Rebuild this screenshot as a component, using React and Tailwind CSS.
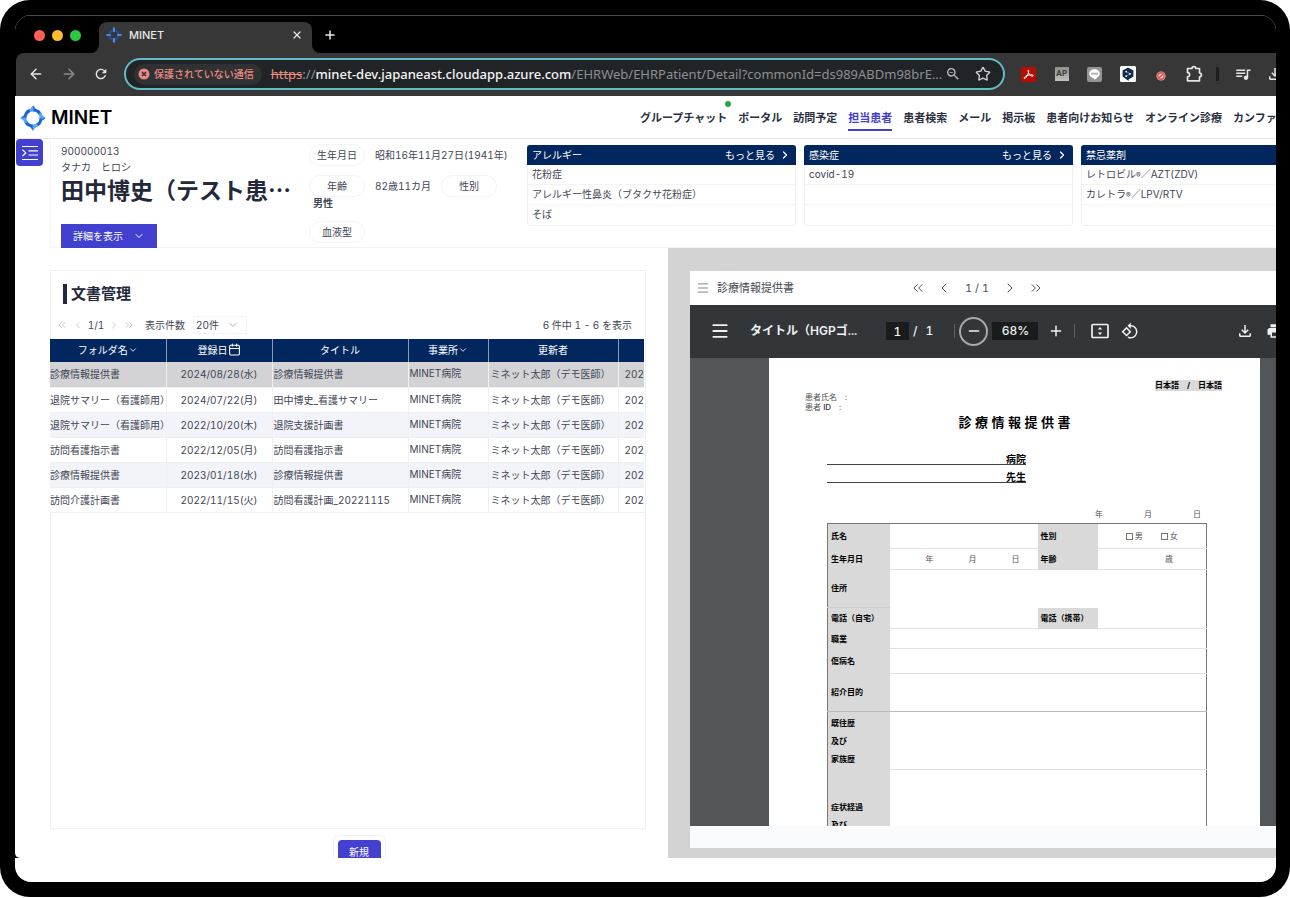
import React from "react";
import {
  ArrowLeft,
  ArrowRight,
  Calendar,
  ChevronDown,
  ChevronLeft,
  ChevronRight,
  ChevronsLeft,
  ChevronsRight,
  Menu,
  Minus,
  Plus,
  Star,
  X,
} from "lucide-react";
import {
  MdOutlineFileDownload,
  MdPrint,
  MdQueueMusic,
  MdRefresh,
  MdRotate90DegreesCcw,
  MdZoomOut,
} from "react-icons/md";

const NAV = [
  { label: "グループチャット", dot: true },
  { label: "ポータル" },
  { label: "訪問予定" },
  { label: "担当患者", active: true },
  { label: "患者検索" },
  { label: "メール" },
  { label: "掲示板" },
  { label: "患者向けお知らせ" },
  { label: "オンライン診療" },
  { label: "カンファ" },
];

const DOCUMENTS = [
  { folder: "診療情報提供書", date: "2024/08/28(水)", title: "診療情報提供書", selected: true },
  { folder: "退院サマリー（看護師用）", date: "2024/07/22(月)", title: "田中博史_看護サマリー" },
  { folder: "退院サマリー（看護師用）", date: "2022/10/20(木)", title: "退院支援計画書" },
  { folder: "訪問看護指示書", date: "2022/12/05(月)", title: "訪問看護指示書" },
  { folder: "診療情報提供書", date: "2023/01/18(水)", title: "診療情報提供書" },
  { folder: "訪問介護計画書", date: "2022/11/15(火)", title: "訪問看護計画_20221115" },
];

function LogoBlade({ angle }) {
  return (
    <g transform={`rotate(${angle} 12 12)`}>
      <path d="M12 .3 L14.600 3.700 Q19 4.600 20.200 8.800 L17.400 9.200 A6 6 0 0 0 12 6 Z" fill="#1f62d6" />
      <path d="M12 .3 L12.600 6 A6 6 0 0 0 8.600 7 L6.600 4.800 L9.300 3.600 Z" fill="#58a6f7" />
    </g>
  );
}

function Logo({ className }) {
  return (
    <svg viewBox="0 0 24 24" className={className} aria-hidden="true">
      <LogoBlade angle={0} />
      <LogoBlade angle={90} />
      <LogoBlade angle={180} />
      <LogoBlade angle={270} />
    </svg>
  );
}

function Favicon() {
  return (
    <svg viewBox="0 0 16 16" className="size-4 shrink-0" fill="none" aria-hidden="true">
      <circle cx="8" cy="8" r="4.600" stroke="#1b4fae" strokeWidth="2.200" strokeDasharray="4.600 2.620" strokeDashoffset="-1.300" />
      <path d="M8 1v3.200M8 11.800V15M1 8h3.200M11.800 8H15" stroke="#5fa8f5" strokeWidth="1.600" strokeLinecap="round" />
    </svg>
  );
}

function TabStrip() {
  return (
    <div className="flex h-[38px] items-end border-t border-[#4a4a4a] pl-[19px]">
      <div className="flex h-full items-center gap-[7px] pt-0.5">
        <span className="size-[11px] rounded-full bg-[#fe5f57]" />
        <span className="size-[11px] rounded-full bg-[#febc2e]" />
        <span className="size-[11px] rounded-full bg-[#28c840]" />
      </div>
      <div className="relative ml-[18px] flex h-[31px] w-[213px] items-center rounded-t-lg bg-[#373737] pr-[9px] pb-1.5 pl-[7px] text-[#e8e8e8]">
        <svg viewBox="0 0 8 8" className="absolute bottom-0 -left-2 size-2" aria-hidden="true">
          <path d="M8 0v8H0a8 8 0 0 0 8-8Z" fill="#373737" />
        </svg>
        <svg viewBox="0 0 8 8" className="absolute -right-2 bottom-0 size-2" aria-hidden="true">
          <path d="M0 0v8h8a8 8 0 0 1-8-8Z" fill="#373737" />
        </svg>
        <Favicon />
        <span className="ml-[7px] text-[11px] leading-4 font-medium">MINET</span>
        <button type="button" aria-label="タブを閉じる" className="ml-auto">
          <X className="size-3" strokeWidth={2.600} />
        </button>
      </div>
      <button type="button" aria-label="新しいタブ" className="ml-[11px] flex h-[31px] items-center pb-1.5 text-[#e8e8e8]">
        <Plus className="size-3.5" strokeWidth={2.600} />
      </button>
    </div>
  );
}

function PdfBadge() {
  return (
    <svg viewBox="0 0 15 15" className="size-[15px]" aria-hidden="true">
      <rect width="15" height="15" rx="1.500" fill="#b80d05" />
      <path d="M7.400 3.200c-1.200 0 .4 3.200 1.300 4.500 1 1.300 3.400 2 3.500.9.100-1.200-4.200-.9-6.200 0-1.800.8-3.400 2.100-2.700 2.900.9.900 3.100-2.900 3.700-4.600.5-1.500 1.300-3.700.4-3.700Z" stroke="#fff" strokeWidth="1" fill="none" />
    </svg>
  );
}

function HexBadge() {
  return (
    <svg viewBox="0 0 16 16" className="size-4" aria-hidden="true">
      <rect width="16" height="16" rx="1.500" fill="#fff" />
      <path d="M8 1.400 13.400 4.400V10.600L8.600 13.400V15L2.600 10.600V4.400Z" fill="#0f2b46" />
      <path d="m6.200 5.600 4 2.200-4 2.400" stroke="#8fb3d1" strokeWidth=".7" fill="none" />
      <circle cx="6.200" cy="5.600" r=".9" fill="#fff" />
      <circle cx="10" cy="7.800" r=".9" fill="#fff" />
      <circle cx="6.200" cy="10.200" r=".9" fill="#fff" />
    </svg>
  );
}

function BlockedBadge() {
  return (
    <svg viewBox="0 0 10 10" className="mt-1 size-[10px]" aria-hidden="true">
      <circle cx="5" cy="5" r="4.600" fill="#f2b8b5" />
      <circle cx="5" cy="5" r="3.200" fill="#f7dcdb" stroke="#dc4b48" strokeWidth="1.400" />
      <path d="M7 3 3 7" stroke="#dc4b48" strokeWidth="1.400" />
    </svg>
  );
}

function PuzzleIcon() {
  return (
    <svg viewBox="0 0 18 18" className="size-[18px]" fill="none" stroke="#e6e6e6" strokeWidth="1.700" strokeLinejoin="round" aria-hidden="true">
      <path d="M2.500 3.500H7a1.900 1.900 0 0 1 3.800 0h3.700V8a1.900 1.900 0 0 1 0 3.800v4H2.500v-4a2.100 2.100 0 0 0 0-4.200Z" />
    </svg>
  );
}

function ExtensionButton({ label, children }) {
  return (
    <button type="button" aria-label={label} className="flex w-[33px] shrink-0 items-center justify-center">
      {children}
    </button>
  );
}

function AddressBar() {
  return (
    <div className="flex h-[43px] items-center rounded-tl-lg bg-[#373737] pb-px text-[#e6e6e6]">
      <div className="flex w-[108px] shrink-0 items-center justify-between pr-[15px] pl-3">
        <button type="button" aria-label="戻る">
          <ArrowLeft className="size-4" strokeWidth={2.200} />
        </button>
        <button type="button" aria-label="進む" className="text-[#8b8b8b]">
          <ArrowRight className="size-4" strokeWidth={2.200} />
        </button>
        <button type="button" aria-label="再読み込み">
          <MdRefresh className="size-4" />
        </button>
      </div>
      <div className="flex h-8 min-w-0 flex-1 items-center rounded-full border-2 border-[#62bcc6] bg-[#202427] pr-3 pl-2">
        <div className="flex h-[21px] shrink-0 items-center gap-1 rounded-full bg-[#303132] pr-2 pl-1 text-[#ea8a84]">
          <svg viewBox="0 0 12 12" className="size-3" aria-hidden="true">
            <circle cx="6" cy="6" r="5.500" fill="#ea8a84" />
            <path d="m4 4 4 4M8 4 4 8" stroke="#303132" strokeWidth="1.500" />
          </svg>
          <span className="text-[10px] leading-4 font-medium">保護されていない通信</span>
        </div>
        <div className="ml-[9px] min-w-0 flex-1 font-['Noto_Sans',sans-serif] text-[13px] leading-5 whitespace-nowrap text-[#8d9092]">
          <span className="text-[#ea8a84] line-through">https</span>://
          <span className="font-medium text-[#f4f4f4]">minet-dev.japaneast.cloudapp.azure.com</span>
          /EHRWeb/EHRPatient/Detail?commonId=ds989ABDm98brE...
        </div>
        <button type="button" aria-label="ズーム" className="mr-3.5 text-[#bdbdbd]">
          <MdZoomOut className="size-4" />
        </button>
        <button type="button" aria-label="ブックマーク">
          <Star className="size-4 text-[#d0d0d0]" />
        </button>
      </div>
      <div className="flex w-[271px] shrink-0 items-center overflow-hidden pl-[7px]">
        <ExtensionButton label="PDF">
          <PdfBadge />
        </ExtensionButton>
        <ExtensionButton label="AP">
          <span className="flex size-3.5 items-start justify-center bg-linear-to-b from-[#8e908c] to-[#c2c3bf] pt-0.5 text-[8px] leading-none font-bold text-[#3f403e]">
            AP
          </span>
        </ExtensionButton>
        <ExtensionButton label="LINE">
          <svg viewBox="0 0 15 15" className="size-[15px]" aria-hidden="true">
            <rect width="15" height="15" rx="2" fill="#949494" />
            <path d="M7.500 2.300c3 0 5.300 1.900 5.300 4.300 0 2.300-2.800 4.500-5 6.100-.6.300-.5-.3-.4-1.300C4.500 11.200 2.200 9.100 2.200 6.600c0-2.400 2.300-4.300 5.300-4.300Z" fill="#fff" />
            <rect x="4" y="5.700" width="7" height="2" fill="#b5b5b5" />
          </svg>
        </ExtensionButton>
        <ExtensionButton label="翻訳">
          <HexBadge />
        </ExtensionButton>
        <ExtensionButton label="ブロック">
          <BlockedBadge />
        </ExtensionButton>
        <ExtensionButton label="拡張機能">
          <PuzzleIcon />
        </ExtensionButton>
        <span className="mx-1.5 h-3.5 w-[3px] shrink-0 bg-[#1d1d1d]" />
        <button type="button" aria-label="メディア" className="flex w-9 shrink-0 justify-center">
          <MdQueueMusic className="size-[18px]" />
        </button>
        <button type="button" aria-label="ダウンロード" className="flex w-7 shrink-0 justify-center">
          <MdOutlineFileDownload className="size-[18px]" />
        </button>
      </div>
    </div>
  );
}

function AppHeader() {
  return (
    <header className="flex h-[43px] shrink-0 items-center border-b border-[#e7e7e9] pl-1">
      <a href="#home" className="flex shrink-0 items-center gap-[5px] pt-0.5">
        <Logo className="size-[26px]" />
        <span className="text-[19px] leading-6 font-semibold text-black">MINET</span>
      </a>
      <nav className="ml-auto flex h-full w-[636px] shrink-0 items-center gap-[11px] overflow-hidden text-[11px] leading-4 font-bold whitespace-nowrap text-[#2a3040]">
        {NAV.map((item) => (
          <a
            key={item.label}
            href="#nav"
            className={
              item.active
                ? "relative shrink-0 border-b-2 border-[#4340cf] pt-[7px] pb-[3px] text-[#4340cf]"
                : "relative shrink-0 border-b-2 border-transparent pt-[7px] pb-[3px]"
            }
          >
            {item.label}
            {item.dot && <span className="absolute -top-0.5 -right-1 size-1.5 rounded-full bg-[#28a745]" />}
          </a>
        ))}
      </nav>
    </header>
  );
}

function Pill({ children }) {
  return (
    <span className="flex h-[22px] w-14 shrink-0 items-center justify-center rounded-full border border-[#f4f4f5]">{children}</span>
  );
}

function SummaryCard({ title, rows, more = true }) {
  return (
    <section className="w-[269px] shrink-0 rounded-[3px] border border-[#f0f0f2]">
      <div className="-m-px flex h-5 items-center justify-between rounded-t-[3px] bg-[#02275f] px-[5px] text-white">
        <h2>{title}</h2>
        {more && (
          <a href="#more" className="flex items-center gap-1">
            もっと見る
            <ChevronRight className="size-3" strokeWidth={2.500} />
          </a>
        )}
      </div>
      <ul className="mt-px">
        {rows.map((row, i) => (
          <li key={i} className="h-5 border-b border-[#f4f4f5] px-1 leading-[19px] last:border-b-0">
            {row}
          </li>
        ))}
      </ul>
    </section>
  );
}

function Registered() {
  return <span className="text-[7px]">®</span>;
}

function PatientHeader() {
  return (
    <div className="flex h-[109px] shrink-0">
      <div className="w-[34px] shrink-0">
        <button type="button" aria-label="メニューを開く" className="flex size-[27px] items-center justify-center rounded-sm bg-[#4340cf]">
          <svg viewBox="0 0 18 18" className="size-[18px]" fill="none" stroke="#fff" strokeWidth="1.200" aria-hidden="true">
            <path d="M1 2.500h16M7.500 6.800H17M7.500 11H17M1 15.500h16M1.500 5.800 4.800 8.900 1.500 12" />
          </svg>
        </button>
      </div>
      <div className="flex min-w-0 flex-1 border-b border-l border-[#f4f4f5] text-[10px] leading-4 text-[#3f4654]">
        <div className="flex w-[258px] shrink-0 flex-col pt-1 pl-2.5">
          <span>900000013</span>
          <span>タナカ　ヒロシ</span>
          <h1 className="font-['Noto_Sans_CJK_JP',sans-serif] text-[23px] leading-7 font-bold whitespace-nowrap text-[#23293a]">
            田中博史（テスト患…
          </h1>
          <button type="button" className="mt-auto -mb-px flex h-6 w-24 items-center justify-between bg-[#4340cf] px-3 text-white">
            詳細を表示
            <ChevronDown className="size-3" />
          </button>
        </div>
        <div className="flex w-[218px] shrink-0 flex-col pt-[5px]">
          <div className="flex items-center gap-2.5 whitespace-nowrap">
            <Pill>生年月日</Pill>
            昭和16年11月27日(1941年)
          </div>
          <div className="mt-[9px] flex items-center gap-2.5">
            <Pill>年齢</Pill>
            <span className="w-14 shrink-0 whitespace-nowrap">82歳11カ月</span>
            <Pill>性別</Pill>
          </div>
          <span className="pl-1 leading-3 font-bold">男性</span>
          <div className="mt-3">
            <Pill>血液型</Pill>
          </div>
        </div>
        <div className="flex min-w-0 flex-1 items-start gap-2 overflow-hidden pt-1.5">
          <SummaryCard title="アレルギー" rows={["花粉症", "アレルギー性鼻炎（ブタクサ花粉症）", "そば"]} />
          <SummaryCard title="感染症" rows={["covid-19", "", ""]} />
          <SummaryCard
            title="禁忌薬剤"
            rows={[
              <>レトロビル<Registered />／AZT(ZDV)</>,
              <>カレトラ<Registered />／LPV/RTV</>,
              "",
            ]}
            more={false}
          />
        </div>
      </div>
    </div>
  );
}

function HeaderCell({ children }) {
  return (
    <th className="border-r border-[#8b9cba] p-0 pb-0.5 font-normal">
      <div className="flex items-center justify-center">{children}</div>
    </th>
  );
}

function rowColor(doc, index) {
  if (doc.selected) return "bg-[#d3d3d5]";
  return index % 2 === 0 ? "bg-[#f3f4f9]" : "bg-white";
}

function DocumentList() {
  return (
    <section className="flex w-[652px] shrink-0 flex-col items-center pl-[34px] text-[10px] leading-4 text-[#3f4654]">
      <div className="mt-[22px] mr-[22px] flex-1 self-stretch border border-[#f0f0f2]">
        <h2 className="mt-[13px] ml-3 border-l-4 border-[#23293a] pl-1 text-[15px] leading-5 font-bold text-[#23293a]">文書管理</h2>
        <div className="mt-3 flex h-[18px] items-center pr-[13px] pl-[5px]">
          <button type="button" aria-label="最初のページ" className="text-[#b8bbc2]">
            <ChevronsLeft className="size-3" strokeWidth={1.500} />
          </button>
          <button type="button" aria-label="前のページ" className="ml-1 text-[#b8bbc2]">
            <ChevronLeft className="size-3" strokeWidth={1.500} />
          </button>
          <span className="mx-[3px] w-[18px] text-center">1/1</span>
          <button type="button" aria-label="次のページ" className="text-[#b8bbc2]">
            <ChevronRight className="size-3" strokeWidth={1.500} />
          </button>
          <button type="button" aria-label="最後のページ" className="ml-[3px] text-[#b8bbc2]">
            <ChevronsRight className="size-3" strokeWidth={1.500} />
          </button>
          <label htmlFor="page-size" className="ml-2.5">
            表示件数
          </label>
          <div className="relative ml-2 flex items-center">
            <select id="page-size" className="h-[18px] w-[54px] appearance-none border border-[#f4f4f5] bg-white pl-0.5">
              <option>20件</option>
            </select>
            <ChevronDown className="pointer-events-none absolute right-2 size-3 text-[#8a8f99]" strokeWidth={1.500} />
          </div>
          <span className="ml-auto">6 件中 1 - 6 を表示</span>
        </div>
        <div className="mt-[5px] mr-px -ml-px overflow-hidden">
          <table className="w-full table-fixed whitespace-nowrap">
            <colgroup>
              <col className="w-[116px]" />
              <col className="w-[106px]" />
              <col className="w-[136px]" />
              <col className="w-20" />
              <col className="w-[130px]" />
              <col />
            </colgroup>
            <thead>
              <tr className="h-[23px] bg-[#02275f] text-white">
                <HeaderCell>
                  フォルダ名
                  <ChevronDown className="size-2.5" strokeWidth={2} />
                </HeaderCell>
                <HeaderCell>
                  登録日
                  <Calendar className="size-[13px]" strokeWidth={2} />
                </HeaderCell>
                <HeaderCell>タイトル</HeaderCell>
                <HeaderCell>
                  事業所
                  <ChevronDown className="size-2.5" strokeWidth={2} />
                </HeaderCell>
                <HeaderCell>更新者</HeaderCell>
                <th />
              </tr>
            </thead>
            <tbody>
              {DOCUMENTS.map((doc, i) => (
                <tr key={i} className={`h-[25px] border-b border-[#eff0f3] ${rowColor(doc, i)}`}>
                  <td className="border-r border-[#eff0f3]">{doc.folder}</td>
                  <td className="border-r border-[#eff0f3] text-center">{doc.date}</td>
                  <td className="border-r border-[#eff0f3] pl-px">{doc.title}</td>
                  <td className="border-r border-[#eff0f3] pt-[3px] pl-px align-top">MINET病院</td>
                  <td className="border-r border-[#eff0f3] pl-0.5">ミネット太郎（デモ医師）</td>
                  <td className="pl-1.5">202</td>
                </tr>
              ))}
            </tbody>
          </table>
        </div>
      </div>
      <div className="mt-1.5 h-[23px] shrink-0 overflow-hidden rounded-t-md border border-b-0 border-[#f0f0f2] px-1 pt-1">
        <button type="button" className="h-6 w-[43px] rounded-t-sm bg-[#4340cf] text-white">
          新規
        </button>
      </div>
    </section>
  );
}

function FormLabel({ children, className = "" }) {
  return <th className={`bg-[#d9d9d9] pl-[3px] text-left font-bold text-black ${className}`}>{children}</th>;
}

function Choice({ id, children }) {
  return (
    <label htmlFor={id} className="flex items-center gap-0.5">
      <input id={id} type="checkbox" className="size-[7px] appearance-none border border-[#777]" />
      {children}
    </label>
  );
}

function ReferralForm() {
  const line = "border-b border-[#e2e2e2]";
  return (
    <table className="mt-[3px] w-full table-fixed border-x border-t border-[#777] whitespace-nowrap">
      <colgroup>
        <col className="w-[62px]" />
        <col />
        <col className="w-[60px]" />
        <col className="w-[109px]" />
      </colgroup>
      <tbody>
        <tr className="h-[25px]">
          <FormLabel>氏名</FormLabel>
          <td className={line} />
          <FormLabel>性別</FormLabel>
          <td className={line}>
            <div className="flex justify-center gap-[18px]">
              <Choice id="male">男</Choice>
              <Choice id="female">女</Choice>
            </div>
          </td>
        </tr>
        <tr className="h-[21px]">
          <FormLabel>生年月日</FormLabel>
          <td className={line}>
            <div className="flex justify-end gap-[35px] pr-[18px]">
              <span>年</span>
              <span>月</span>
              <span>日</span>
            </div>
          </td>
          <FormLabel>年齢</FormLabel>
          <td className={`pr-[33px] text-right ${line}`}>歳</td>
        </tr>
        <tr className="h-[38px]">
          <FormLabel className="border-b border-[#cfcfcf]">住所</FormLabel>
          <td colSpan={3} />
        </tr>
        <tr className="h-[21px]">
          <FormLabel>電話（自宅）</FormLabel>
          <td className={line} />
          <FormLabel>電話（携帯）</FormLabel>
          <td className={line} />
        </tr>
        <tr className="h-5">
          <FormLabel>職業</FormLabel>
          <td colSpan={3} className={line} />
        </tr>
        <tr className="h-[25px]">
          <FormLabel>傷病名</FormLabel>
          <td colSpan={3} className={line} />
        </tr>
        <tr className="h-[38px]">
          <FormLabel className="border-b border-[#bbb]">紹介目的</FormLabel>
          <td colSpan={3} className="border-b border-[#bbb]" />
        </tr>
        <tr className="h-[58px]">
          <FormLabel className="leading-[18px]">
            既往歴
            <br />
            及び
            <br />
            家族歴
          </FormLabel>
          <td colSpan={3} className={line} />
        </tr>
        <tr className="h-[120px]">
          <FormLabel className="pt-7 align-top leading-[18px]">
            症状経過
            <br />
            及び
          </FormLabel>
          <td colSpan={3} />
        </tr>
      </tbody>
    </table>
  );
}

function PdfToolbar() {
  return (
    <div className="flex h-[53px] shrink-0 items-center overflow-hidden bg-[#323639] pb-px pl-5 text-[12px] leading-4 font-medium text-[#f1f1f1]">
      <button type="button" aria-label="メニュー">
        <Menu className="size-5" strokeWidth={2.200} />
      </button>
      <span className="ml-5 w-[136px] shrink-0 font-semibold whitespace-nowrap">タイトル（HGPゴ...</span>
      <input aria-label="ページ番号" readOnly value="1" className="h-[18px] w-[23px] shrink-0 bg-[#191b1c] text-center" />
      <span className="ml-1">/</span>
      <span className="ml-2 w-[29px]">1</span>
      <span className="h-3.5 w-px bg-[#5d6164]" />
      <button type="button" aria-label="縮小" className="ml-1 flex size-[29px] shrink-0 items-center justify-center rounded-full border-2 border-[#a6a8aa]">
        <Minus className="size-4" strokeWidth={2.200} />
      </button>
      <span className="ml-1 flex h-[18px] w-[46px] shrink-0 items-center justify-center bg-[#191b1c]">68%</span>
      <button type="button" aria-label="拡大" className="ml-2.5">
        <Plus className="size-4" strokeWidth={2.200} />
      </button>
      <span className="ml-2.5 h-3.5 w-px shrink-0 bg-[#5d6164]" />
      <button type="button" aria-label="ページに合わせる" className="ml-4">
        <svg viewBox="0 0 18 16" className="h-4 w-[18px]" aria-hidden="true">
          <rect x="1" y="1.500" width="16" height="13" rx="1" fill="none" stroke="#f1f1f1" strokeWidth="1.700" />
          <path d="M9 4l2.200 2.600H6.800ZM9 12 6.800 9.400h4.400Z" fill="#f1f1f1" />
        </svg>
      </button>
      <button type="button" aria-label="回転" className="ml-3">
        <MdRotate90DegreesCcw className="size-[18px]" />
      </button>
      <div className="ml-auto flex w-10 shrink-0 gap-3">
        <button type="button" aria-label="ダウンロード">
          <MdOutlineFileDownload className="size-[18px]" />
        </button>
        <button type="button" aria-label="印刷">
          <MdPrint className="size-[18px]" />
        </button>
      </div>
    </div>
  );
}

function Addressee({ children }) {
  return (
    <p className="w-[199px] border-b border-[#444] pt-2 text-right text-[10px] leading-[9px] font-bold text-black">{children}</p>
  );
}

function PdfPage() {
  return (
    <div className="h-full flex-1 overflow-hidden bg-white pt-[22px] text-[8px] leading-[10px] text-[#555]">
      <div className="flex justify-end pr-[38px]">
        <span className="h-[11px] bg-[#dadada] leading-[11px] font-bold text-black">日本語　/　日本語</span>
      </div>
      <div className="mt-px pl-9">
        <p>患者氏名　:</p>
        <p>
          患者 <span className="font-medium text-[#333]">ID</span>　:
        </p>
      </div>
      <h2 className="mt-px text-center text-[13px] leading-[18px] font-bold text-black">診 療 情 報 提 供 書</h2>
      <div className="mt-4 mr-[53px] ml-[58px]">
        <Addressee>病院</Addressee>
        <Addressee>先生</Addressee>
        <div className="mt-[25px] flex h-3 items-center justify-end gap-[41px] pr-1.5">
          <span>年</span>
          <span>月</span>
          <span>日</span>
        </div>
        <ReferralForm />
      </div>
    </div>
  );
}

function Viewer() {
  return (
    <section className="flex min-h-0 min-w-0 flex-1 flex-col bg-[#d3d3d3] pt-[23px] pb-2.5 pl-[22px]">
      <div className="flex h-[34px] shrink-0 items-center bg-white pl-1.5 text-[11px] leading-4 text-[#3f4654]">
        <button type="button" aria-label="一覧" className="text-[#6b7280]">
          <Menu className="size-3.5" strokeWidth={1.500} />
        </button>
        <h2 className="ml-[7px]">診療情報提供書</h2>
        <div className="ml-[116px] flex items-center text-[#4b5160]">
          <button type="button" aria-label="最初">
            <ChevronsLeft className="size-4" strokeWidth={1.500} />
          </button>
          <button type="button" aria-label="前" className="ml-2.5">
            <ChevronLeft className="size-4" strokeWidth={1.500} />
          </button>
          <span className="mx-[11px] w-7 text-center">1 / 1</span>
          <button type="button" aria-label="次">
            <ChevronRight className="size-4" strokeWidth={1.500} />
          </button>
          <button type="button" aria-label="最後" className="ml-2.5">
            <ChevronsRight className="size-4" strokeWidth={1.500} />
          </button>
        </div>
      </div>
      <PdfToolbar />
      <div className="flex min-h-0 flex-1 overflow-hidden bg-[#525659] pr-4 pl-[79px]">
        <PdfPage />
      </div>
      <div className="h-[22px] shrink-0 bg-[#fafbfc]" />
    </section>
  );
}

export default function App() {
  return (
    <div className="h-screen bg-white pb-px font-['Inter','Noto_Sans_CJK_JP',sans-serif] tabular-nums" lang="ja">
      <div className="h-full overflow-hidden rounded-[30px] bg-black pt-[15px] pr-[14px] pb-[15px] pl-[15px]">
        <div className="flex h-full flex-col overflow-hidden rounded-2xl bg-white pb-6">
          <div className="flex min-h-0 flex-1 flex-col bg-black">
            <TabStrip />
            <div className="pl-px">
              <AddressBar />
            </div>
            <div className="flex min-h-0 flex-1 flex-col overflow-hidden rounded-bl-[5px] bg-white pl-px">
              <AppHeader />
              <PatientHeader />
              <main className="flex min-h-0 flex-1">
                <DocumentList />
                <Viewer />
              </main>
            </div>
          </div>
        </div>
      </div>
    </div>
  );
}
